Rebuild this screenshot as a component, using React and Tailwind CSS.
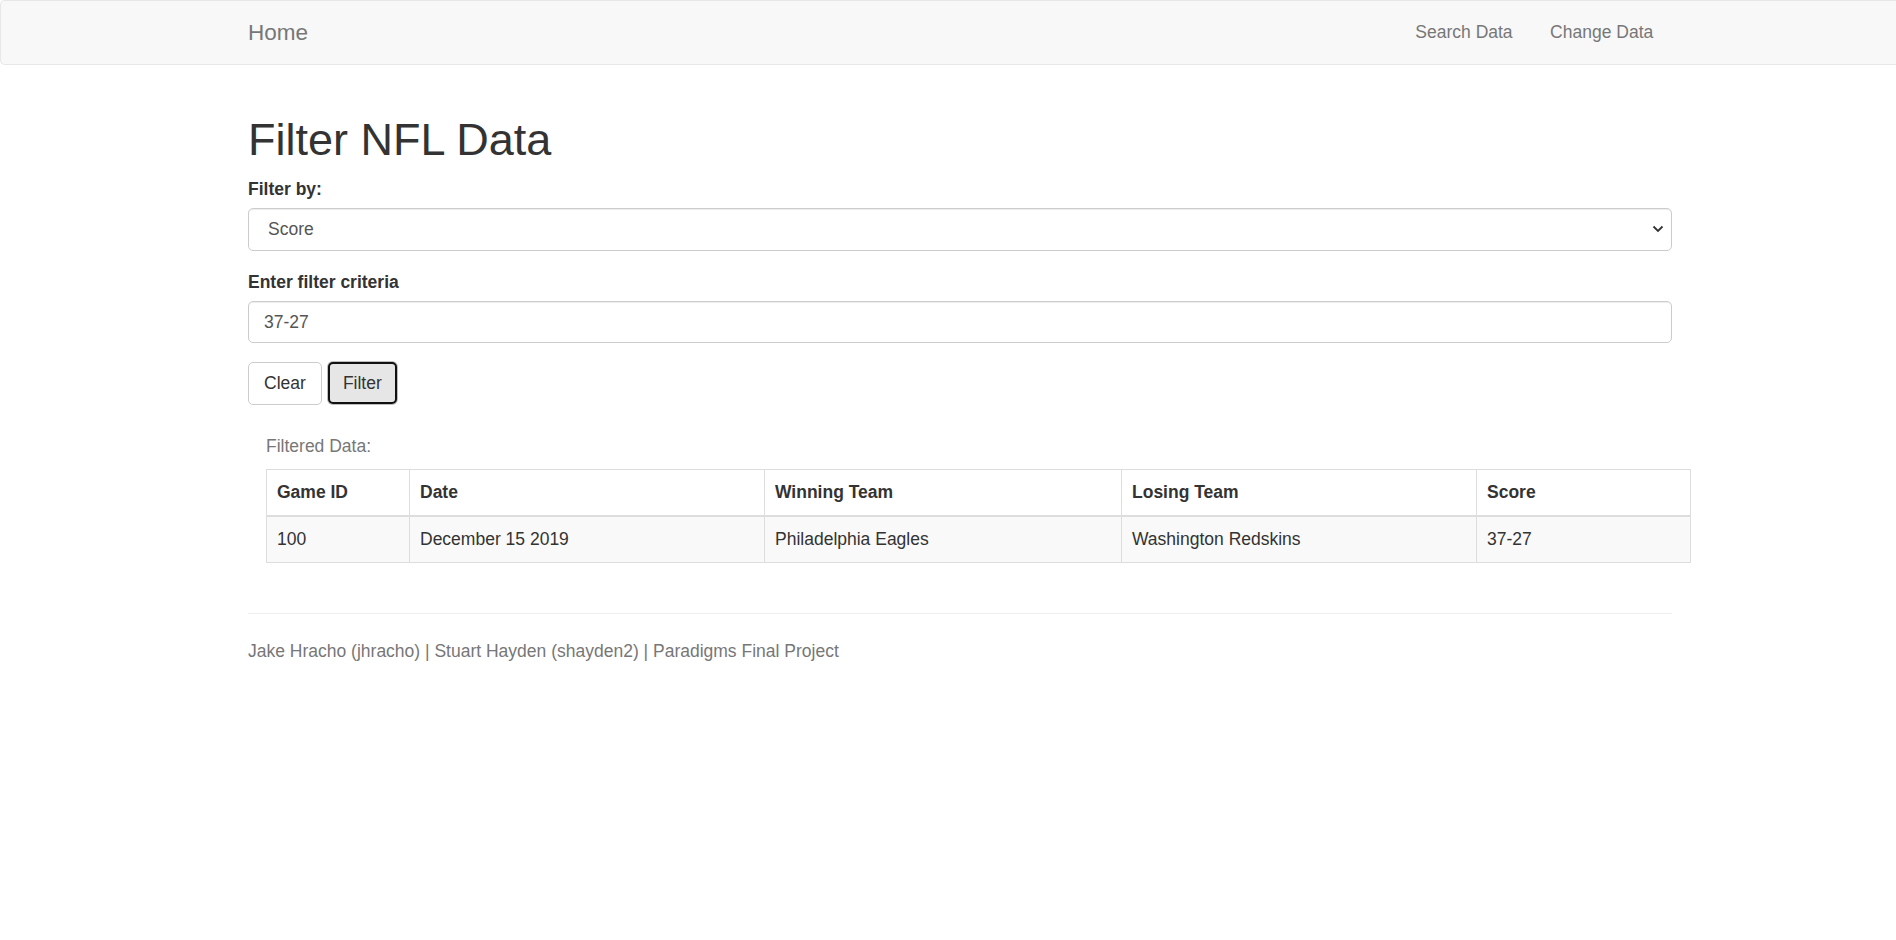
import React from "react";

const NavBar = () => (
  <nav className="h-[65px] bg-[#f8f8f8] border border-[#e7e7e7] border-r-0 rounded-l-[5px]">
    <div className="w-[1424px] ml-[247px] h-full flex items-center justify-between">
      <span className="text-[22.5px] text-[#777]">Home</span>
      <div className="flex items-center text-[17.5px] text-[#777]">
        <span className="px-[18.75px]">Search Data</span>
        <span className="pl-[18.75px] pr-[18.75px]">Change Data</span>
      </div>
    </div>
  </nav>
);

const rows = [
  {
    id: "100",
    date: "December 15 2019",
    winner: "Philadelphia Eagles",
    loser: "Washington Redskins",
    score: "37-27",
  },
];

const cols = [
  { label: "Game ID", key: "id", w: "w-[143px]" },
  { label: "Date", key: "date", w: "w-[355px]" },
  { label: "Winning Team", key: "winner", w: "w-[357px]" },
  { label: "Losing Team", key: "loser", w: "w-[355px]" },
  { label: "Score", key: "score", w: "w-[214px]" },
];

export default function App() {
  return (
    <div
      className="min-h-[940px] bg-white text-[#333] text-[17.5px] leading-[25px]"
      style={{ fontFamily: '"Liberation Sans", Arial, sans-serif' }}
    >
      <NavBar />

      <div className="w-[1424px] ml-[248px] pt-[50px]">
        <h1 className="text-[45px] leading-[49.5px] mb-[12.5px] font-normal">
          Filter NFL Data
        </h1>

        {/* Filter by */}
        <div className="mb-[18.75px]">
          <label className="block font-bold mb-[6.25px]">Filter by:</label>
          <div className="relative">
            <select
              className="w-full h-[42.5px] appearance-none border border-[#ccc] rounded-[5px] pl-[19px] text-[#555] bg-white shadow-[inset_0_1px_1px_rgba(0,0,0,0.075)] outline-none"
              defaultValue="Score"
            >
              <option>Score</option>
              <option>Game ID</option>
              <option>Date</option>
              <option>Winning Team</option>
              <option>Losing Team</option>
            </select>
            <svg
              className="absolute right-[8px] top-[16px] pointer-events-none"
              width="12"
              height="10"
              viewBox="0 0 12 10"
            >
              <path d="M1.5 2.5 L6 7 L10.5 2.5" fill="none" stroke="#333" strokeWidth="1.8" />
            </svg>
          </div>
        </div>

        {/* criteria */}
        <div className="mb-[18.75px]">
          <label className="block font-bold mb-[6.25px]">Enter filter criteria</label>
          <input
            className="w-full h-[42.5px] border border-[#ccc] rounded-[5px] px-[15px] text-[#555] bg-white shadow-[inset_0_1px_1px_rgba(0,0,0,0.075)] outline-none"
            defaultValue="37-27"
          />
        </div>

        <div className="flex gap-[6px]">
          <button className="h-[42.5px] px-[15px] border border-[#ccc] rounded-[5px] bg-white text-[#333]">
            Clear
          </button>
          <button className="h-[42px] w-[69px] border-2 border-[#111] rounded-[5px] bg-[#e6e6e6] text-[#333] shadow-[0_0_0_1px_#bdbdbd]">
            Filter
          </button>
        </div>

        {/* results */}
        <div className="mt-[19px] w-[1424px] ml-[18px]">
          <div className="py-[10px] text-[#777]">Filtered Data:</div>
          <table className="w-full border-collapse border border-[#ddd] table-fixed">
            <thead>
              <tr>
                {cols.map((c) => (
                  <th
                    key={c.key}
                    className={`${c.w} text-left font-bold px-[10px] py-[10px] border border-[#ddd] border-b-[2.5px]`}
                  >
                    {c.label}
                  </th>
                ))}
              </tr>
            </thead>
            <tbody>
              {rows.map((r, i) => (
                <tr key={i} className="bg-[#f9f9f9]">
                  {cols.map((c) => (
                    <td key={c.key} className="px-[10px] py-[10px] border border-[#ddd]">
                      {r[c.key]}
                    </td>
                  ))}
                </tr>
              ))}
            </tbody>
          </table>
        </div>

        <hr className="mt-[50px] mb-[25px] border-t border-[#eee]" />

        <footer className="text-[#777]">
          Jake Hracho (jhracho) | Stuart Hayden (shayden2) | Paradigms Final Project
        </footer>
      </div>
    </div>
  );
}
